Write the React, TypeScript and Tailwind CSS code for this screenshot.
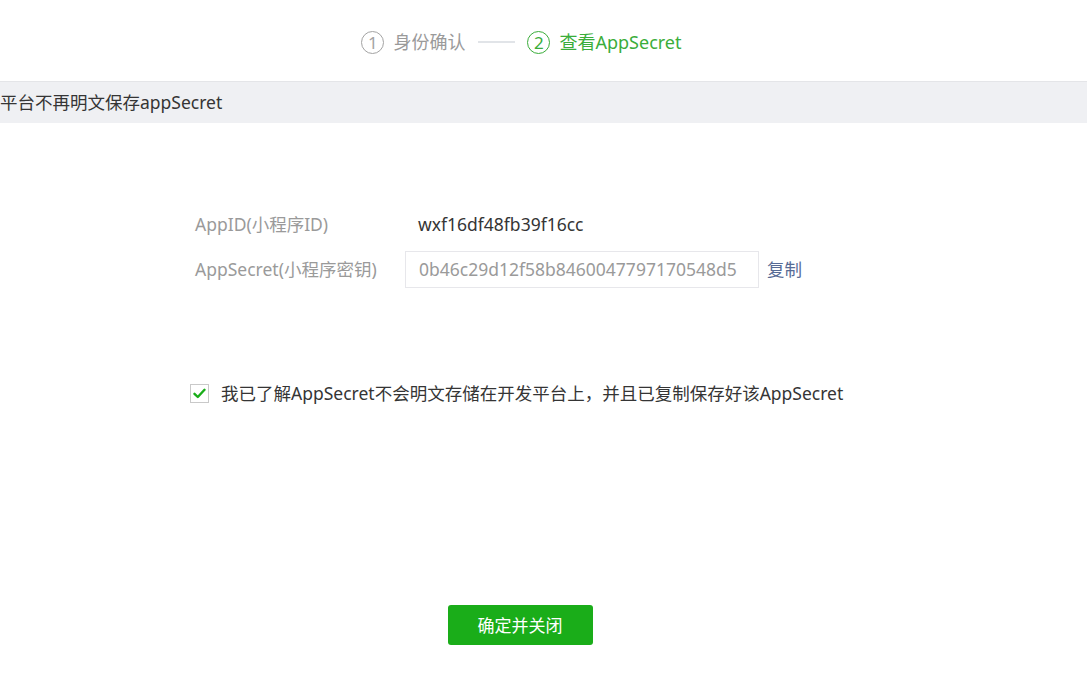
import React from "react";

const font = {
  fontFamily: '"Noto Sans", "Noto Sans CJK SC", sans-serif',
};

function StepCircle({ n, active }: { n: number; active?: boolean }) {
  return (
    <span
      className={
        "flex h-[23px] w-[23px] items-center justify-center rounded-full border-[1.5px] text-[17px] leading-none " +
        (active ? "border-[#3aad3a] text-[#3aad3a]" : "border-[#a3a3a3] text-[#a3a3a3]")
      }
    >
      {n}
    </span>
  );
}

export default function App() {
  return (
    <div className="min-h-screen w-full overflow-hidden bg-white text-[#353535]" style={font}>
      {/* steps */}
      <div className="flex h-[81px] w-[1040px] items-center justify-center pt-[3px]">
        <div className="ml-[3px] flex items-center">
          <StepCircle n={1} />
          <span className="ml-[9px] text-[18px] text-[#9a9a9a]">身份确认</span>
          <span className="ml-[13px] mr-[12px] h-[2px] w-[37px] bg-[#e1e4e8]"></span>
          <StepCircle n={2} active />
          <span className="ml-[9px] text-[18px] text-[#3aad3a]">查看AppSecret</span>
        </div>
      </div>

      {/* notice band */}
      <div className="flex h-[42px] items-center border-t border-[#e4e5e8] bg-[#eff0f3] text-[17.5px] text-[#353535]">
        <span className="whitespace-nowrap">平台不再明文保存appSecret</span>
      </div>

      {/* form */}
      <div className="pl-[195px] pt-[87px] text-[17.5px]">
        <div className="flex h-[28px] items-center">
          <span className="w-[223px] text-[#9a9a9a]">AppID(小程序ID)</span>
          <span className="text-[#353535]">wxf16df48fb39f16cc</span>
        </div>
        <div className="mt-[13px] flex items-center">
          <span className="w-[210px] text-[#9a9a9a]">AppSecret(小程序密钥)</span>
          <div className="flex h-[37px] w-[354px] items-center overflow-hidden whitespace-nowrap border border-[#e7e7eb] px-[13px] text-[#9a9a9a]">
            0b46c29d12f58b8460047797170548d5
          </div>
          <a className="ml-[8px] text-[#576b95]">复制</a>
        </div>
      </div>

      {/* agreement */}
      <div className="mt-[92px] flex items-center pl-[190px]">
        <span className="flex h-[19px] w-[19px] items-center justify-center border border-[#c9c9c9] bg-white">
          <svg width="13" height="11" viewBox="0 0 13 11" fill="none">
            <path d="M1.5 5.8 L4.8 9 L11.5 1.8" stroke="#1aad19" strokeWidth="2.4" strokeLinecap="round" strokeLinejoin="round" />
          </svg>
        </span>
        <span className="ml-[12px] whitespace-nowrap text-[17.5px] text-[#353535]">
          我已了解AppSecret不会明文存储在开发平台上，并且已复制保存好该AppSecret
        </span>
      </div>

      {/* action */}
      <div className="mt-[199px] flex w-[1040px] justify-center">
        <button className="h-[40px] w-[145px] rounded-[3px] bg-[#1aad19] text-[17px] text-white">
          确定并关闭
        </button>
      </div>
    </div>
  );
}
